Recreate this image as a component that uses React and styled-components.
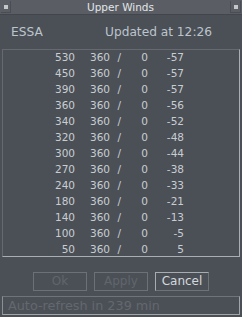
import React from 'react';
import styled, { createGlobalStyle } from 'styled-components';

const GlobalStyle = createGlobalStyle`
  html, body {
    margin: 0;
    padding: 0;
    background-color: #4b5057;
  }
`;

const Window = styled.div`
  width: 242px;
  height: 317px;
  display: flex;
  flex-direction: column;
  background-color: #4b5057;
  font-family: "DejaVu Sans", "Liberation Sans", sans-serif;
  overflow: hidden;
`;

const TitleBar = styled.div`
  height: 14px;
  display: flex;
  align-items: center;
  justify-content: space-between;
  padding: 0 1px;
  background-color: #5a5e64;
  border-bottom: 1px solid #43474d;
`;

const TitleButton = styled.div`
  width: 9px;
  height: 11px;
  display: flex;
  align-items: center;
  justify-content: center;
  border-right: 1px solid #4a4e54;
  border-bottom: 1px solid #4a4e54;
  border-left: ${props => props.right ? '1px solid #4a4e54' : 'none'};

  &::after {
    content: '';
    width: 4px;
    height: 4px;
    background-color: #c4c6c8;
  }
`;

const Title = styled.span`
  color: #e2e5e8;
  font-size: 10.5px;
  line-height: 14px;
`;

const Header = styled.div`
  height: 34px;
  display: flex;
  align-items: center;
  justify-content: space-between;
  padding: 0 30px 0 11px;
  color: #bcc4cc;
  font-size: 12.2px;
`;

const TableBox = styled.div`
  height: 206px;
  margin: 0 2px;
  overflow: hidden;
  border-top: 1px solid #666a70;
  border-left: 1px solid #666a70;
  border-right: 1px solid #a9aeb3;
  border-bottom: 1px solid #a9aeb3;
`;

const Row = styled.div`
  display: grid;
  grid-template-columns: 72px 35px 11px 27px 36px;
  height: 16px;
  line-height: 14px;
  font-size: 10.5px;
  color: #c9cdd2;
`;

const Cell = styled.span`
  text-align: right;
  white-space: pre;
`;

const Footer = styled.div`
  display: flex;
  justify-content: center;
  gap: 7px;
  padding-top: 15px;
  height: 24px;
`;

const Button = styled.button`
  width: 54px;
  height: 19px;
  padding: 0;
  background: transparent;
  font-family: "DejaVu Sans", "Liberation Sans", sans-serif;
  font-size: 12px;
  line-height: 17px;
  color: ${props => props.disabled ? '#60666c' : '#d4d8dc'};
  border: 1px solid ${props => props.disabled ? '#6c7177' : '#6e7378'};
  border-top-color: ${props => props.disabled ? '#6c7177' : '#a7acb1'};
  border-left-color: ${props => props.disabled ? '#6c7177' : '#a7acb1'};
`;

const StatusBar = styled.div`
  height: 17px;
  margin: 0 2px;
  padding-left: 5px;
  display: flex;
  align-items: center;
  color: #63686e;
  font-size: 12.8px;
  border-top: 1px solid #6f7479;
  border-left: 1px solid #8a8f94;
  border-right: 1px solid #a0a5aa;
  border-bottom: 1px solid #a0a5aa;
`;

const winds = [
  [530, -57], [450, -57], [390, -57], [360, -56], [340, -52],
  [320, -48], [300, -44], [270, -38], [240, -33], [180, -21],
  [140, -13], [100, -5], [50, 5],
];

export default function App() {
  return (
    <Window>
      <GlobalStyle />
      <TitleBar>
        <TitleButton />
        <Title>Upper Winds</Title>
        <TitleButton right />
      </TitleBar>
      <Header>
        <span>ESSA</span>
        <span>Updated at 12:26</span>
      </Header>
      <TableBox>
        {winds.map(([level, temp]) => (
          <Row key={level}>
            <Cell>{level}</Cell>
            <Cell>360</Cell>
            <Cell>/</Cell>
            <Cell>0</Cell>
            <Cell>{temp < 0 ? '-' + Math.abs(temp) : temp}</Cell>
          </Row>
        ))}
      </TableBox>
      <Footer>
        <Button disabled>Ok</Button>
        <Button disabled>Apply</Button>
        <Button>Cancel</Button>
      </Footer>
      <StatusBar>Auto-refresh in 239 min</StatusBar>
    </Window>
  );
}
